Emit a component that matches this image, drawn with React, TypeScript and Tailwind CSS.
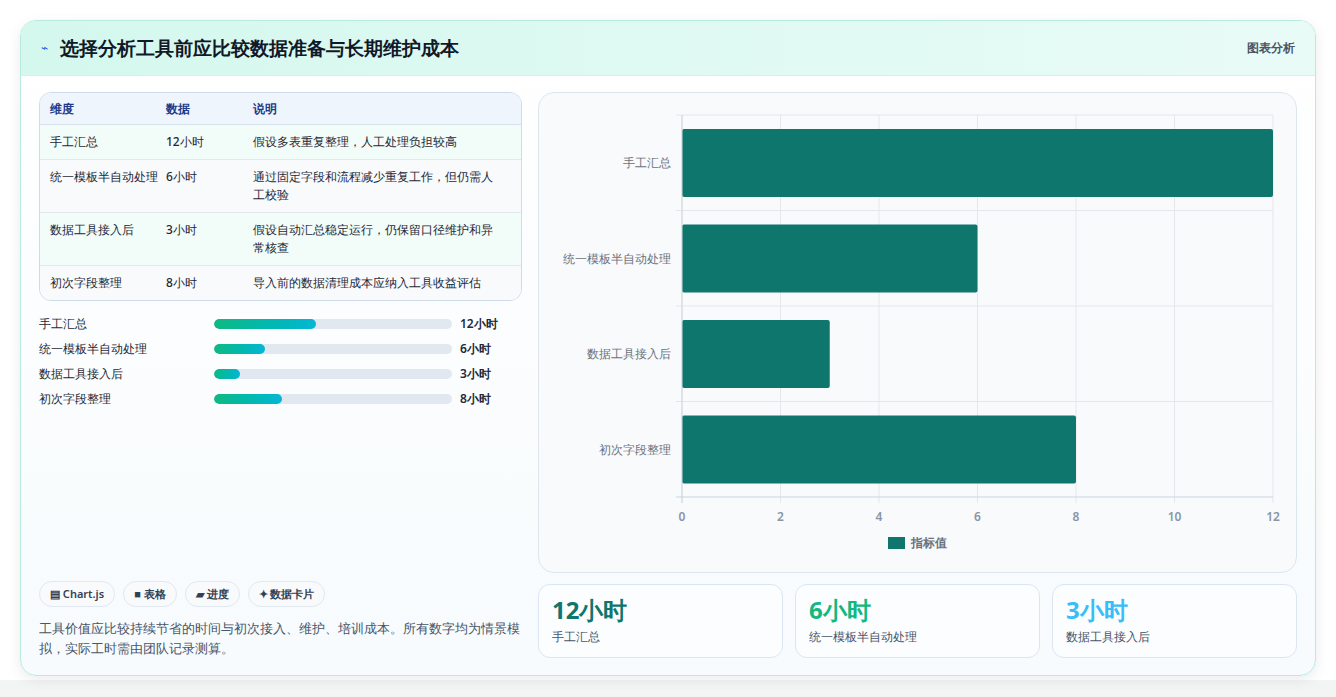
const rows = [
  { name: "手工汇总", value: 12, note: "假设多表重复整理，人工处理负担较高" },
  { name: "统一模板半自动处理", value: 6, note: "通过固定字段和流程减少重复工作，但仍需人工校验" },
  { name: "数据工具接入后", value: 3, note: "假设自动汇总稳定运行，仍保留口径维护和异常核查" },
  { name: "初次字段整理", value: 8, note: "导入前的数据清理成本应纳入工具收益评估" },
];

function Chart() {
  const x0 = 143, w = 591, top = 22, band = 95.5;
  const sx = (v: number) => x0 + (v / 12) * w;
  return (
    <svg width="757" height="479" className="block">
      {[0, 2, 4, 6, 8, 10, 12].map((t) => (
        <g key={t}>
          <line x1={sx(t)} x2={sx(t)} y1={top} y2={top + 382 + 6} stroke="#e5e7eb" />
          <text x={sx(t)} y={428} textAnchor="middle" fontSize="12" fontWeight="600" fill="#8a94a6">{t}</text>
        </g>
      ))}
      {rows.map((r, i) => (
        <g key={r.name}>
          <line x1={x0 - 6} x2={x0 + w} y1={top + band * i} y2={top + band * i} stroke="#e5e7eb" />
          <rect x={x0} y={top + band * i + 14} width={sx(r.value) - x0} height={68} rx="2" fill="#0f766e" />
          <text x={x0 - 11} y={top + band * i + 52} textAnchor="end" fontSize="12" fill="#6b7280">{r.name}</text>
        </g>
      ))}
      <line x1={x0} x2={x0} y1={top} y2={top + 388} stroke="#d1d5db" />
      <line x1={x0 - 6} x2={x0 + w} y1={top + 382} y2={top + 382} stroke="#cbd5e1" />
      <rect x={349} y={444} width={17} height={12} fill="#0f766e" />
      <text x={372} y={454} fontSize="12" fontWeight="600" fill="#6b7280">指标值</text>
    </svg>
  );
}

export default function App() {
  const colors = ["text-[#0f766e]", "text-[#10b981]", "text-[#38bdf8]"];
  return (
    <div className="w-[1336px] h-[697px] bg-[#f3f5f5] font-['Noto_Sans_CJK_SC',sans-serif] text-[#1f2937]">
      <div className="h-[680px] bg-white pt-[20px] px-[20px]">
        <div className="h-[656px] rounded-2xl border border-[#b8ebe0] bg-gradient-to-b from-white to-[#f7fbfd] shadow-[0_4px_14px_rgba(0,0,0,0.08)] overflow-hidden flex flex-col">
          <div className="h-[55px] shrink-0 flex items-center justify-between px-[20px] bg-gradient-to-r from-[#d4f8ee] to-[#e9fbf7] border-b border-[#d7f1ea]">
            <div className="flex items-center gap-3">
              <span className="text-[#2563eb] text-xs">⌁</span>
              <span className="text-[19px] font-bold text-[#111827]">选择分析工具前应比较数据准备与长期维护成本</span>
            </div>
            <span className="text-[12px] font-semibold text-[#4b5563]">图表分析</span>
          </div>
          <div className="flex-1 flex gap-4 px-[18px] pt-[16px] pb-[18px]">
            <div className="w-[484px] flex flex-col">
              <div className="rounded-xl border border-[#cfdbe8] overflow-hidden text-[12px]">
                <div className="grid grid-cols-[116px_87px_1fr] px-[10px] h-[32px] items-center bg-[#eef5fd] text-[#1e3a8a] font-semibold border-b border-[#d8e2ee]">
                  <span>维度</span><span>数据</span><span>说明</span>
                </div>
                {rows.map((r, i) => (
                  <div key={r.name} className={`grid grid-cols-[116px_87px_1fr] px-[10px] py-[8px] leading-[18px] font-medium ${i < 3 ? "border-b border-[#e2e8f0]" : ""} ${i % 2 ? "bg-[#f8fafc]" : "bg-[#f2fcf8]"}`}>
                    <span className="pr-2">{r.name}</span><span>{r.value}小时</span><span className="pr-2">{r.note}</span>
                  </div>
                ))}
              </div>
              <div className="mt-[13px] flex flex-col gap-[6px] text-[12px] font-medium">
                {rows.map((r) => (
                  <div key={r.name} className="flex items-center h-[19px]">
                    <span className="w-[175px]">{r.name}</span>
                    <div className="w-[238px] h-[10px] rounded-full bg-[#e2e8f0] overflow-hidden">
                      <div className="h-full rounded-full bg-gradient-to-r from-[#10b981] to-[#06b6d4]" style={{ width: `${(r.value / 28) * 100}%` }} />
                    </div>
                    <span className="ml-[8px] font-semibold">{r.value}小时</span>
                  </div>
                ))}
              </div>
              <div className="mt-auto flex gap-[8px] text-[11px] font-semibold text-[#334155]">
                {["▤ Chart.js", "■ 表格", "▰ 进度", "✦ 数据卡片"].map((c) => (
                  <span key={c} className="h-[26px] px-[10px] flex items-center rounded-full border border-[#e2e8f0] bg-[#f8fafc]">{c}</span>
                ))}
              </div>
              <p className="mt-[11px] text-[13px] leading-[20px] text-[#475569]">工具价值应比较持续节省的时间与初次接入、维护、培训成本。所有数字均为情景模拟，实际工时需由团队记录测算。</p>
            </div>
            <div className="flex-1 flex flex-col gap-[11px]">
              <div className="h-[481px] rounded-2xl border border-[#dde6ef] bg-[#f8fafc]">
                <Chart />
              </div>
              <div className="flex gap-[12px]">
                {rows.slice(0, 3).map((r, i) => (
                  <div key={r.name} className="flex-1 h-[74px] rounded-xl border border-[#dbe6f2] bg-[#fbfdff] px-[13px] pt-[9px]">
                    <div className={`text-[24px] font-bold leading-[32px] ${colors[i]}`}>{r.value}小时</div>
                    <div className="text-[12px] text-[#475569] mt-[2px]">{r.name}</div>
                  </div>
                ))}
              </div>
            </div>
          </div>
        </div>
      </div>
    </div>
  );
}
